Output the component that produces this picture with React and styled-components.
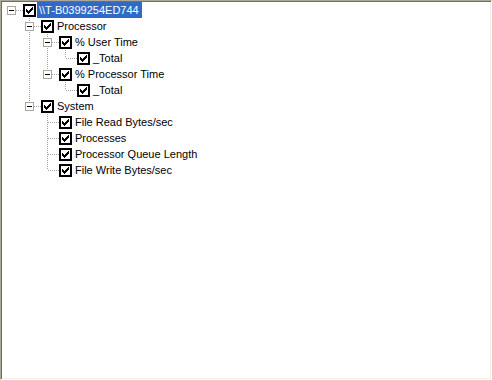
import styled, { createGlobalStyle } from "styled-components";

const GlobalStyle = createGlobalStyle`
  html, body {
    margin: 0;
    padding: 0;
    background: #ffffff;
  }
`;

const tree = {
  label: "\\\\T-B0399254ED744",
  selected: true,
  children: [
    {
      label: "Processor",
      children: [
        { label: "% User Time", children: [{ label: "_Total" }] },
        { label: "% Processor Time", children: [{ label: "_Total" }] },
      ],
    },
    {
      label: "System",
      children: [
        { label: "File Read Bytes/sec" },
        { label: "Processes" },
        { label: "Processor Queue Length" },
        { label: "File Write Bytes/sec" },
      ],
    },
  ],
};

// flatten the tree into rows, keeping which ancestor columns still need a guide line
function flatten(node, level, guides, hasPrev, hasNext, out) {
  out.push({ ...node, level, guides, hasPrev, hasNext });
  const kids = node.children || [];
  kids.forEach((kid, i) => {
    flatten(kid, level + 1, [...guides, hasNext], true, i < kids.length - 1, out);
  });
  return out;
}

const rows = flatten(tree, 0, [], false, false, []);

const CHECK = [
  "......X",
  ".....XX",
  "X...XXX",
  "XX.XXX.",
  "XXXXX..",
  ".XXX...",
  "..X....",
];

function CheckBox() {
  const cells = [];
  CHECK.forEach((line, y) =>
    line.split("").forEach((c, x) => {
      if (c === "X") cells.push(<rect key={`${x}-${y}`} x={x + 3} y={y + 3} width="1" height="1" fill="#000" />);
    })
  );
  return (
    <Box width="13" height="13" shapeRendering="crispEdges">
      <rect x="1" y="1" width="11" height="11" fill="#fff" stroke="#000" strokeWidth="2" />
      {cells}
    </Box>
  );
}

export default function App() {
  return (
    <>
      <GlobalStyle />
      <Panel>
        {rows.map((r, i) => (
          <Row key={i}>
            {r.guides.map((g, j) => (
              <Guide key={j} $line={g} />
            ))}
            <Expander $top={r.hasPrev} $bottom={r.hasNext}>
              {r.children && (
                <Toggle>
                  <Minus />
                </Toggle>
              )}
            </Expander>
            <CheckBox />
            <Label $selected={r.selected}>{r.label}</Label>
          </Row>
        ))}
      </Panel>
    </>
  );
}

const dotV = "linear-gradient(to bottom, #a0a0a0 50%, transparent 50%)";
const dotH = "linear-gradient(to right, #a0a0a0 50%, transparent 50%)";

const Panel = styled.div`
  width: 492px;
  height: 380px;
  box-sizing: border-box;
  border: 1px solid;
  border-color: #aca899 #ffffff #ffffff #aca899;
  box-shadow: inset 1px 1px 0 #716f64, inset -1px -1px 0 #f1efe2;
  padding: 1px;
  background: #ffffff;
  font-family: Tahoma, "Liberation Sans", Arial, sans-serif;
  font-size: 11px;
  color: #000;
  overflow: hidden;
`;

const Row = styled.div`
  display: flex;
  align-items: center;
  height: 16px;
`;

const Guide = styled.div`
  width: 18px;
  height: 16px;
  flex: none;
  background: ${(p) => (p.$line ? dotV : "none")};
  background-size: 1px 2px;
  background-repeat: repeat-y;
  background-position: 9px 0;
`;

const Expander = styled.div`
  position: relative;
  width: 21px;
  height: 16px;
  flex: none;

  &::before {
    content: "";
    position: absolute;
    left: 9px;
    width: 1px;
    top: ${(p) => (p.$top ? "0" : "8px")};
    bottom: ${(p) => (p.$bottom ? "0" : "8px")};
    background: ${dotV};
    background-size: 1px 2px;
  }

  &::after {
    content: "";
    position: absolute;
    left: 10px;
    top: 8px;
    width: 11px;
    height: 1px;
    background: ${dotH};
    background-size: 2px 1px;
  }
`;

const Toggle = styled.div`
  position: absolute;
  left: 5px;
  top: 4px;
  width: 9px;
  height: 9px;
  box-sizing: border-box;
  border: 1px solid #aca899;
  background: #ffffff;
  z-index: 1;
  display: flex;
  align-items: center;
  justify-content: center;
`;

const Minus = styled.div`
  width: 5px;
  height: 1px;
  background: #000;
`;

const Box = styled.svg`
  flex: none;
  display: block;
`;

const Label = styled.span`
  margin-left: 1px;
  padding: 0 3px 0 2px;
  height: 16px;
  line-height: 16px;
  white-space: nowrap;
  background: ${(p) => (p.$selected ? "#316ac5" : "transparent")};
  color: ${(p) => (p.$selected ? "#ffffff" : "#000000")};
`;
